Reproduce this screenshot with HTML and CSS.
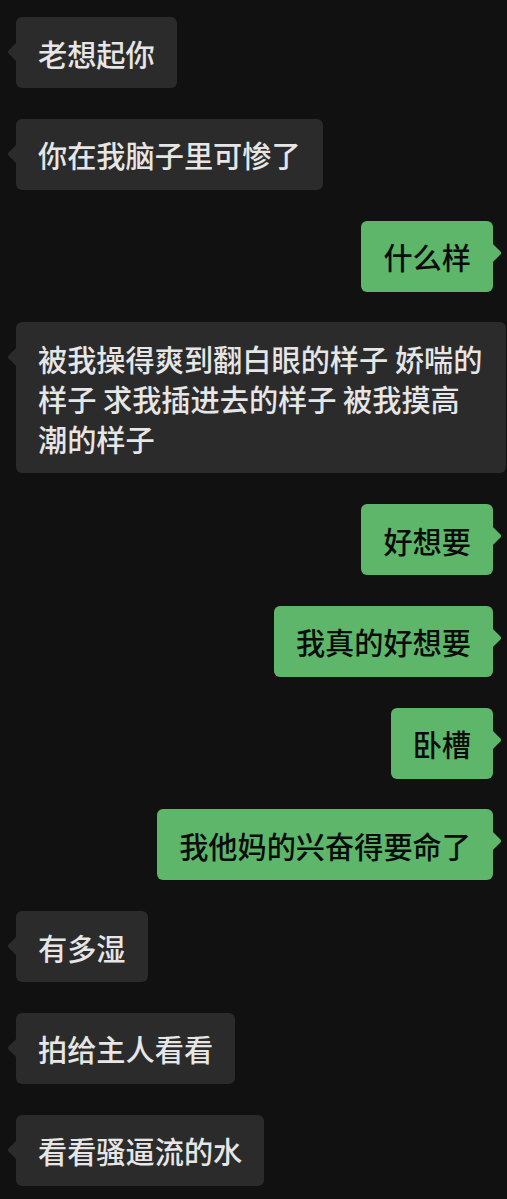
FILE: index.html
```html
<!DOCTYPE html>
<html lang="zh-CN">
<head>
    <meta charset="UTF-8">
    <meta name="viewport" content="width=device-width, initial-scale=1.0">
    <title>聊天</title>
    <link rel="stylesheet" href="styles.css">
</head>
<body>
    <div class="chat">
        <div class="msg in"><div class="bubble">老想起你</div></div>
        <div class="msg in"><div class="bubble">你在我脑子里可惨了</div></div>
        <div class="msg out"><div class="bubble">什么样</div></div>
        <div class="msg in"><div class="bubble">被我操得爽到翻白眼的样子 娇喘的样子 求我插进去的样子 被我摸高潮的样子</div></div>
        <div class="msg out"><div class="bubble">好想要</div></div>
        <div class="msg out"><div class="bubble">我真的好想要</div></div>
        <div class="msg out"><div class="bubble">卧槽</div></div>
        <div class="msg out"><div class="bubble">我他妈的兴奋得要命了</div></div>
        <div class="msg in"><div class="bubble">有多湿</div></div>
        <div class="msg in"><div class="bubble">拍给主人看看</div></div>
        <div class="msg in"><div class="bubble">看看骚逼流的水</div></div>
    </div>
</body>
</html>
```

FILE: styles.css
```css
html, body {
    margin: 0;
    padding: 0;
    background-color: #111111;
}
body {
    font-family: "Noto Sans CJK SC", "Noto Sans", sans-serif;
    height: 1199px;
    overflow: hidden;
}
.chat {
    display: flex;
    flex-direction: column;
    gap: 30.75px;
    padding: 17px 0 0 16px;
}
.msg {
    display: flex;
}
.msg.out {
    justify-content: flex-end;
    margin-right: 14px;
}
.bubble {
    position: relative;
    max-width: 445.5px;
    padding: 15.5px 22px;
    font-size: 29.2px;
    font-weight: 500;
    line-height: 40px;
    border-radius: 6px;
    word-break: break-all;
}
.bubble::before {
    content: "";
    position: absolute;
    top: 28px;
    width: 14px;
    height: 14px;
    border-radius: 2px;
    transform: rotate(45deg);
}
.in .bubble {
    background-color: #2b2b2b;
    color: #e6e6e6;
}
.in .bubble::before {
    left: -6px;
    background-color: #2b2b2b;
}
.out .bubble {
    background-color: #5db66a;
    color: #0c0c0c;
}
.out .bubble::before {
    right: -6px;
    top: 25px;
    background-color: #5db66a;
}
```
